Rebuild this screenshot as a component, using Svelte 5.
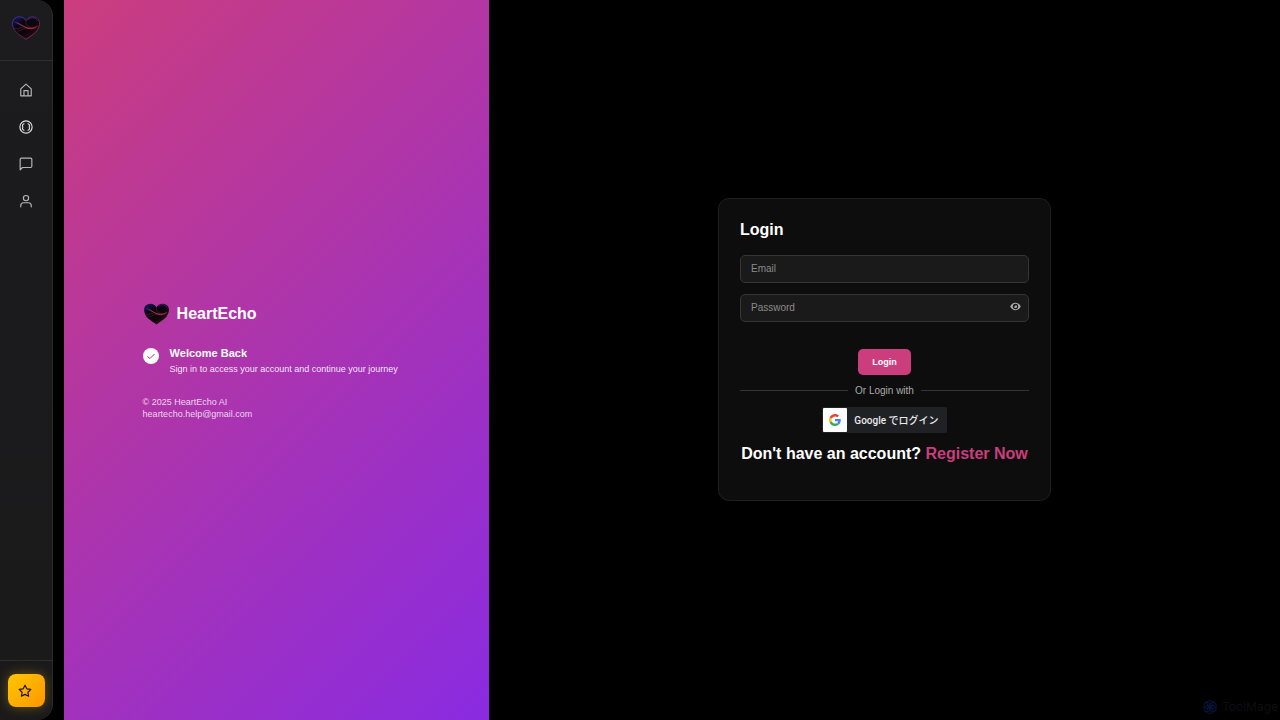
<script lang="ts">
  let email = $state('');
  let password = $state('');
  let showPassword = $state(false);

  const links = [
    { name: 'Home', icon: 'home' },
    { name: 'Discover', icon: 'discover' },
    { name: 'Chat', icon: 'chat' },
    { name: 'Profile', icon: 'profile' }
  ];

  function handleSubmit(event: SubmitEvent) {
    event.preventDefault();
  }

  function togglePassword() {
    showPassword = !showPassword;
  }
</script>

{#snippet heart(id: string)}
  <svg class="heart" viewBox="0 0 30 25" aria-hidden="true">
    <defs>
      <linearGradient id="{id}-edge" x1="0" y1="0" x2="1" y2="1">
        <stop offset="0" stop-color="#3d35b8" />
        <stop offset="0.5" stop-color="#54264f" />
        <stop offset="1" stop-color="#a52c3c" />
      </linearGradient>
      <linearGradient id="{id}-fill" x1="0" y1="0" x2="0.8" y2="1">
        <stop offset="0" stop-color="#1d1a66" />
        <stop offset="0.35" stop-color="#08060f" />
        <stop offset="0.7" stop-color="#12060c" />
        <stop offset="1" stop-color="#3a101c" />
      </linearGradient>
      <linearGradient id="{id}-wave" x1="0" y1="0" x2="1" y2="0">
        <stop offset="0" stop-color="#34247c" />
        <stop offset="0.5" stop-color="#b83848" />
        <stop offset="1" stop-color="#6c1c2c" />
      </linearGradient>
    </defs>
    <path
      class="outline"
      d="M15 5C12.5-.2 5-.4 2 3.800C-.5 8 1.500 13 5 17C8 20 12 22 15 24.300C18 22 22 20 25 17C28.500 13 30.500 8 28 3.800C25-.4 17.500-.2 15 5Z"
      fill="url(#{id}-fill)"
      stroke="url(#{id}-edge)"
    />
    <path
      d="M2 6C7 6 10 9 14 11C19 13.500 24 12 28 9.500C26 14 20 15 15 12.500C10 10 6 8 2 6Z"
      fill="url(#{id}-wave)"
    />
    <path
      d="M15 5C14 9 17 11 21 12.500M3 13C8 14 11 10 15 11.500M6 16C11 15 12 12 17 13"
      fill="none"
      stroke="#8b2a3c"
      stroke-width="0.7"
      opacity="0.6"
    />
    <path d="M17 4C20 1 25 1 27 5" fill="none" stroke="#4b2ca4" stroke-width="0.8" />
  </svg>
{/snippet}

<div class="app">
  <aside class="sidebar">
    <a class="logo" href="#home" aria-label="HeartEcho">{@render heart('side')}</a>
    <nav>
      {#each links as link}
        <a href="#{link.icon}" aria-label={link.name}>
          <svg class="icon" class:bright={link.icon === 'discover'} viewBox="0 0 24 24" aria-hidden="true">
            {#if link.icon === 'home'}
              <path d="M3 10l9-8 9 8v12H3zM8.500 22v-9h7v9" />
            {:else if link.icon === 'discover'}
              <circle cx="12" cy="12" r="10.500" />
              <path d="M8.500 6.500c-3 1-3 3.500-2 5.500-1 2-1 4.500 2 5.500M15.500 6.500c3 1 3 3.500 2 5.500 1 2 1 4.500-2 5.500" />
            {:else if link.icon === 'chat'}
              <path d="M22 16a2 2 0 0 1-2 2H6l-4 4V4a2 2 0 0 1 2-2h16a2 2 0 0 1 2 2z" />
            {:else}
              <circle cx="12" cy="7" r="4.500" />
              <path d="M3 22v-2a5 5 0 0 1 5-5h8a5 5 0 0 1 5 5v2" />
            {/if}
          </svg>
        </a>
      {/each}
    </nav>
    <div class="upgrade">
      <button type="button" aria-label="Upgrade">
        <svg viewBox="0 0 24 24" aria-hidden="true">
          <path d="M12 2l3.100 6.300 6.900 1-5 4.900 1.200 6.800L12 17.800 5.800 21 7 14.200 2 9.300l6.900-1z" />
        </svg>
      </button>
    </div>
  </aside>

  <section class="hero">
    <div class="hero-content">
      <div class="brand">
        {@render heart('hero')}
        <h1>HeartEcho</h1>
      </div>
      <div class="welcome">
        <span class="check">
          <svg viewBox="0 0 16 16" aria-hidden="true"><path d="M4.500 8.500l2.500 2L11.500 6" /></svg>
        </span>
        <div>
          <h2>Welcome Back</h2>
          <p>Sign in to access your account and continue your journey</p>
        </div>
      </div>
      <footer>
        <p>© 2025 HeartEcho AI</p>
        <p>heartecho.help@gmail.com</p>
      </footer>
    </div>
  </section>

  <main>
    <form class="card" onsubmit={handleSubmit}>
      <h2>Login</h2>
      <input type="email" placeholder="Email" aria-label="Email" bind:value={email} />
      <div class="password">
        <input
          type={showPassword ? 'text' : 'password'}
          placeholder="Password"
          aria-label="Password"
          bind:value={password}
        />
        <button class="eye" type="button" aria-label="Show password" onclick={togglePassword}>
          <svg viewBox="0 0 24 18" aria-hidden="true">
            <path
              fill-rule="evenodd"
              d="M12 1C6.500 1 2.500 4.500.5 9c2 4.500 6 8 11.500 8s9.500-3.500 11.500-8C21.500 4.500 17.500 1 12 1zM12 3a6 6 0 1 1 0 12 6 6 0 0 1 0-12z"
            />
            <path d="M12 5.500a3.500 3.500 0 1 1-3.500 3.500c2 .8 3.500-1 3.500-3.500z" />
          </svg>
        </button>
      </div>
      <button class="submit" type="submit">Login</button>
      <div class="divider"><span>Or Login with</span></div>
      <button class="google" type="button">
        <span class="google-mark">
          <svg viewBox="0 0 48 48" aria-hidden="true">
            <path fill="#ea4335" d="M24 9.500c3.540 0 6.710 1.220 9.210 3.600l6.850-6.850C35.900 2.380 30.470 0 24 0 14.620 0 6.510 5.380 2.560 13.220l7.980 6.190C12.430 13.720 17.740 9.500 24 9.500z" />
            <path fill="#4285f4" d="M46.980 24.550c0-1.570-.15-3.090-.38-4.550H24v9.020h12.940c-.58 2.960-2.260 5.480-4.780 7.180l7.730 6c4.510-4.180 7.090-10.360 7.090-17.650z" />
            <path fill="#fbbc05" d="M10.530 28.590c-.48-1.450-.76-2.990-.76-4.590s.27-3.140.76-4.590l-7.980-6.190C.92 16.460 0 20.120 0 24c0 3.880.92 7.540 2.560 10.780l7.970-6.190z" />
            <path fill="#34a853" d="M24 48c6.480 0 11.930-2.130 15.890-5.810l-7.730-6c-2.150 1.450-4.920 2.300-8.160 2.300-6.260 0-11.570-4.220-13.470-9.910l-7.980 6.190C6.510 42.620 14.620 48 24 48z" />
          </svg>
        </span>
        <span class="google-text">Google でログイン</span>
      </button>
      <p class="register">Don't have an account? <a href="#register">Register Now</a></p>
    </form>
  </main>

  <div class="watermark" aria-hidden="true">
    <svg viewBox="0 0 16 16">
      <circle cx="8" cy="8" r="2" />
      {#each [0, 60, 120, 180, 240, 300] as angle}
        <circle cx="8" cy="4.500" r="3" transform="rotate({angle} 8 8)" />
      {/each}
    </svg>
    <span>ToolMage</span>
  </div>
</div>

<style>
  :global(body) {
    margin: 0;
    background: #000;
  }

  .app {
    display: flex;
    min-height: 100vh;
    background: #000;
    color: #fff;
    font-family: 'Liberation Sans', Arial, sans-serif;
    font-size: 9px;
    line-height: 12px;
    overflow: hidden;
    position: relative;
  }

  .app * {
    box-sizing: border-box;
  }

  h1,
  h2,
  p {
    margin: 0;
  }

  a {
    color: inherit;
    text-decoration: none;
  }

  button,
  input {
    font-family: inherit;
  }

  svg {
    display: block;
    flex: none;
  }

  .sidebar {
    display: flex;
    flex-direction: column;
    flex: none;
    width: 53px;
    margin-right: 11px;
    background: linear-gradient(180deg, #1c1c1e, #1a1a1b);
    border-right: 1px solid #2b2b2d;
    border-radius: 0 16px 16px 0;
    overflow: hidden;
  }

  .logo {
    display: flex;
    justify-content: center;
    height: 61px;
    padding-top: 16px;
    border-bottom: 1px solid #2e2e30;
  }

  .logo .heart {
    width: 30px;
    height: 24px;
  }

  .outline {
    stroke-width: 1;
  }

  .brand .outline {
    stroke-width: 0;
  }

  nav {
    display: flex;
    flex-direction: column;
    align-items: center;
    gap: 13px;
    padding-top: 17px;
  }

  nav a {
    display: grid;
    place-items: center;
    width: 36px;
    height: 24px;
  }

  .icon {
    width: 14px;
    height: 14px;
    fill: none;
    stroke: #b5b5b6;
    stroke-width: 2;
    stroke-linejoin: round;
    stroke-linecap: round;
  }

  .icon.bright {
    stroke: #dededf;
  }

  .upgrade {
    display: flex;
    justify-content: center;
    margin-top: auto;
    padding: 13px 0;
    border-top: 1px solid #2e2e30;
  }

  .upgrade button {
    display: grid;
    place-items: center;
    width: 37px;
    height: 33px;
    padding: 0 2px 0 0;
    border: 0;
    border-radius: 8px;
    background: linear-gradient(135deg, #ffc800, #ff9500);
    box-shadow: 0 0 12px rgba(255, 193, 7, 0.35);
    cursor: pointer;
  }

  .upgrade svg {
    width: 14px;
    height: 14px;
    fill: none;
    stroke: #1c1206;
    stroke-width: 2;
    stroke-linejoin: round;
  }

  .hero {
    display: flex;
    flex-direction: column;
    align-items: center;
    justify-content: center;
    flex: none;
    width: 33.2%;
    padding-top: 3px;
    background: linear-gradient(135deg, #cb3d7d, #8a2be2);
  }

  .hero-content {
    width: 63%;
  }

  .brand {
    display: flex;
    align-items: center;
    gap: 7px;
    margin-bottom: 20px;
  }

  .brand .heart {
    width: 27px;
    height: 22px;
  }

  h1,
  .card h2,
  .register {
    font-size: 16px;
    font-weight: bold;
    line-height: 22px;
  }

  .welcome {
    display: flex;
    gap: 11px;
    margin-bottom: 19px;
  }

  .check {
    flex: none;
    width: 16px;
    height: 16px;
    margin-top: 3px;
    border-radius: 50%;
    background: #fff;
  }

  .check path {
    fill: none;
    stroke: #a83a70;
    stroke-width: 1;
  }

  .welcome h2 {
    font-size: 11px;
    line-height: 16px;
  }

  .welcome p {
    line-height: 16px;
    color: rgba(255, 255, 255, 0.9);
  }

  footer {
    color: rgba(255, 255, 255, 0.8);
  }

  main {
    display: flex;
    align-items: center;
    justify-content: center;
    flex: 1;
    padding-bottom: 22px;
  }

  .card {
    display: flex;
    flex-direction: column;
    width: 333px;
    padding: 20px 21px 35px;
    background: #0d0d0d;
    border: 1px solid #1f1f1f;
    border-radius: 11px;
  }

  .card h2 {
    margin-bottom: 14px;
  }

  input {
    width: 100%;
    height: 28px;
    margin: 0 0 11px;
    padding: 0 10px;
    background: #1a1a1a;
    border: 1px solid #353535;
    border-radius: 5px;
    outline: none;
    color: #fff;
    font-size: 10px;
  }

  input:focus {
    border-color: #cb3d7d;
  }

  input::placeholder {
    color: #8a8a8a;
    opacity: 1;
  }

  .password {
    position: relative;
  }

  .eye {
    position: absolute;
    top: 8px;
    right: 8px;
    padding: 0;
    border: 0;
    background: none;
    cursor: pointer;
  }

  .eye svg {
    width: 11px;
    height: 9px;
    fill: #aaa;
  }

  .submit {
    align-self: center;
    width: 53px;
    height: 26px;
    margin: 16px 0 10px;
    border: 0;
    border-radius: 5px;
    background: #cb3d7d;
    color: #fff;
    font-size: 9px;
    font-weight: bold;
    cursor: pointer;
  }

  .divider {
    display: flex;
    align-items: center;
    gap: 7px;
    color: #aaa;
    font-size: 10px;
  }

  .divider::before,
  .divider::after {
    content: '';
    flex: 1;
    height: 1px;
    background: #353535;
  }

  .google {
    display: flex;
    align-items: center;
    align-self: center;
    height: 26px;
    margin: 10px 0;
    padding: 1px 8px 1px 1px;
    gap: 7px;
    border: 0;
    border-radius: 2px;
    background: #202124;
    color: #e8eaed;
    font-family: Roboto, 'Noto Sans CJK JP', sans-serif;
    font-size: 10px;
    font-weight: 500;
    cursor: pointer;
  }

  .google-mark {
    display: grid;
    place-items: center;
    width: 24px;
    height: 24px;
    border-radius: 1px;
    background: #fff;
  }

  .google-mark svg {
    width: 12px;
    height: 12px;
  }

  .register {
    text-align: center;
    white-space: nowrap;
  }

  .register a {
    color: #cb3d7d;
  }

  .watermark {
    position: absolute;
    right: 2px;
    bottom: 5px;
    display: flex;
    align-items: center;
    gap: 4px;
    color: #0e0e10;
    font-family: Inter, sans-serif;
    font-size: 12px;
    line-height: 16px;
  }

  .watermark svg {
    width: 16px;
    height: 16px;
    fill: none;
    stroke: #06163c;
    stroke-width: 1;
  }
</style>
